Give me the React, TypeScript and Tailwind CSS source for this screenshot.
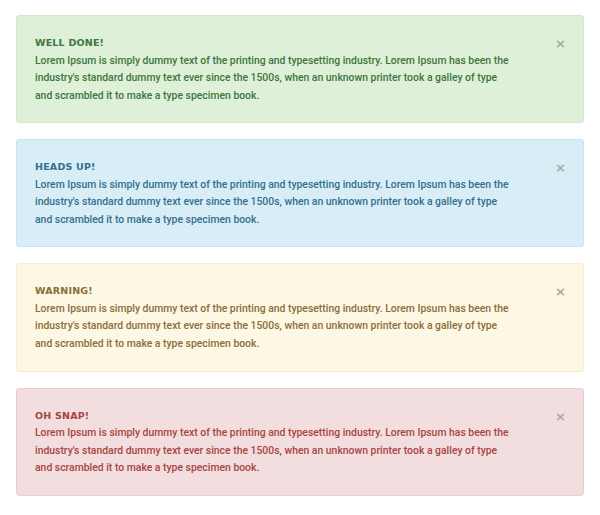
const alerts = [
    {
        title: 'Well done!',
        box: 'bg-[#dff0d8] border-[#d6e9c6] text-[#3c763d]',
    },
    {
        title: 'Heads up!',
        box: 'bg-[#d9edf7] border-[#bce8f1] text-[#31708f]',
    },
    {
        title: 'Warning!',
        box: 'bg-[#fcf8e3] border-[#faebcc] text-[#8a6d3b]',
    },
    {
        title: 'Oh snap!',
        box: 'bg-[#f2dede] border-[#ebccd1] text-[#a94442]',
    },
];

const body =
    "Lorem Ipsum is simply dummy text of the printing and typesetting industry. Lorem Ipsum has been the industry's standard dummy text ever since the 1500s, when an unknown printer took a galley of type and scrambled it to make a type specimen book.";

export default function App() {
    return (
        <div className="min-h-screen bg-white pt-[15px] px-4 flex flex-col gap-4 font-['Roboto',sans-serif]">
            {alerts.map((a) => (
                <div
                    key={a.title}
                    className={`relative border rounded-[3px] pl-[18px] pr-[40px] py-[18.1px] ${a.box}`}
                >
                    <button className="absolute right-[17px] top-[21px] text-[#a8a8a8] text-[13px] leading-none font-bold font-['DejaVu_Sans',sans-serif]">
                        ×
                    </button>
                    <h4 className="text-[9.5px] leading-[17.5px] font-bold uppercase tracking-[0.2px] font-['DejaVu_Sans',sans-serif]">
                        {a.title}
                    </h4>
                    <p className="text-[10.4px] leading-[17.5px] font-medium max-w-[480px]">{body}</p>
                </div>
            ))}
        </div>
    );
}
